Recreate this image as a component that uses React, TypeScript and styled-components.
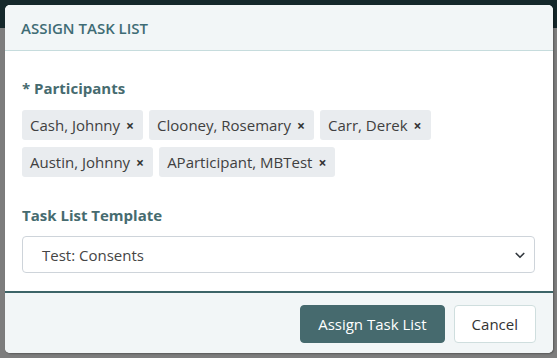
import React from "react";
import styled, { createGlobalStyle } from "styled-components";

const Global = createGlobalStyle`
  html, body { margin: 0; padding: 0; }
  body { font-family: "Open Sans", "Noto Sans", sans-serif; }
  * { box-sizing: border-box; }
`;

const Backdrop = styled.div`
  width: 557px;
  height: 358px;
  padding: 5px 4px 5px 5px;
  background: linear-gradient(#15282b 0 28px, #7d7d7d 28px);
  overflow: hidden;
`;

const Modal = styled.div`
  width: 548px;
  height: 348px;
  display: flex;
  flex-direction: column;
  background: #fff;
  border-radius: 5px;
  overflow: hidden;
  box-shadow: 1px 1px 2px rgba(0, 0, 0, 0.3);
`;

const Header = styled.div`
  height: 46px;
  flex: none;
  display: flex;
  align-items: center;
  padding: 0 16px;
  background: #f2f6f7;
  border-bottom: 1px solid #c6dcdd;
`;

const Title = styled.h1`
  margin: 0;
  font-size: 15px;
  font-weight: 600;
  color: #3f6c75;
  letter-spacing: 0;
`;

const Body = styled.div`
  flex: 1;
  min-height: 0;
  padding: 27px 18px 0 17px;
  display: flex;
  flex-direction: column;
`;

const Label = styled.div<{ $top?: number }>`
  font-size: 15px;
  font-weight: 700;
  color: #466b6f;
  line-height: 20px;
  margin-top: ${(p) => p.$top ?? 0}px;
`;

const Tags = styled.div`
  display: flex;
  flex-wrap: wrap;
  gap: 7px 6px;
  margin-top: 12px;
  width: 440px;
`;

const Tag = styled.span`
  display: inline-flex;
  align-items: center;
  height: 30px;
  padding: 0 9px 0 8px;
  background: #e9ecef;
  border-radius: 3px;
  font-size: 15px;
  color: #404040;
`;

const Remove = styled.span`
  margin-left: 6px;
  font-size: 14px;
  font-weight: 700;
  color: #333;
`;

const SelectBox = styled.div`
  margin-top: 11px;
  height: 37px;
  display: flex;
  align-items: center;
  justify-content: space-between;
  padding: 0 8px 0 19px;
  border: 1px solid #ced4da;
  border-radius: 4px;
  font-size: 15px;
  color: #454545;
`;

const Footer = styled.div`
  height: 62px;
  flex: none;
  display: flex;
  justify-content: flex-end;
  align-items: center;
  gap: 9px;
  padding: 2px 17px 0 0;
  background: #f2f6f7;
  border-top: 2px solid #3d6568;
`;

const Button = styled.button<{ $primary?: boolean }>`
  height: 38px;
  padding: 0 17px;
  border-radius: 4px;
  font-family: inherit;
  font-size: 15px;
  cursor: pointer;
  border: 1px solid ${(p) => (p.$primary ? "#466a6e" : "#cfdede")};
  background: ${(p) => (p.$primary ? "#466a6e" : "#fff")};
  color: ${(p) => (p.$primary ? "#fff" : "#333")};
`;

const people = [
  "Cash, Johnny",
  "Clooney, Rosemary",
  "Carr, Derek",
  "Austin, Johnny",
  "AParticipant, MBTest",
];

export default function App() {
  return (
    <>
      <Global />
      <Backdrop>
        <Modal>
          <Header>
            <Title>ASSIGN TASK LIST</Title>
          </Header>
          <Body>
            <Label>* Participants</Label>
            <Tags>
              {people.map((p) => (
                <Tag key={p}>
                  {p}
                  <Remove>×</Remove>
                </Tag>
              ))}
            </Tags>
            <Label $top={28}>Task List Template</Label>
            <SelectBox>
              <span>Test: Consents</span>
              <svg width="12" height="12" viewBox="0 0 16 16">
                <path
                  d="M3 6l5 5 5-5"
                  fill="none"
                  stroke="#343a40"
                  strokeWidth="2.2"
                  strokeLinecap="round"
                  strokeLinejoin="round"
                />
              </svg>
            </SelectBox>
          </Body>
          <Footer>
            <Button $primary>Assign Task List</Button>
            <Button>Cancel</Button>
          </Footer>
        </Modal>
      </Backdrop>
    </>
  );
}
